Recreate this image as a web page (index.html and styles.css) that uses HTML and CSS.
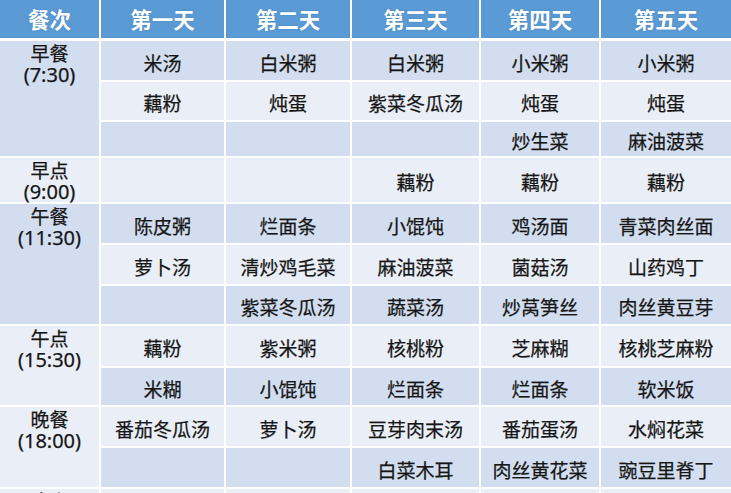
FILE: index.html
```html
<!DOCTYPE html>
<html lang="zh-CN">
<head>
<meta charset="utf-8">
<title>菜单</title>
<link rel="stylesheet" href="styles.css">
</head>
<body>
<table class="menu">
  <colgroup>
    <col class="c0"><col class="c1"><col class="c2"><col class="c3"><col class="c4"><col class="c5">
  </colgroup>
  <thead>
    <tr class="head">
      <th>餐次</th><th>第一天</th><th>第二天</th><th>第三天</th><th>第四天</th><th>第五天</th>
    </tr>
  </thead>
  <tbody>
    <tr class="dark h41">
      <td class="meal" rowspan="3"><span class="name">早餐</span><span class="time">(7:30)</span></td>
      <td>米汤</td><td>白米粥</td><td>白米粥</td><td>小米粥</td><td>小米粥</td>
    </tr>
    <tr class="light h40">
      <td>藕粉</td><td>炖蛋</td><td>紫菜冬瓜汤</td><td>炖蛋</td><td>炖蛋</td>
    </tr>
    <tr class="dark h36">
      <td></td><td></td><td></td><td>炒生菜</td><td>麻油菠菜</td>
    </tr>
    <tr class="light h46">
      <td class="meal"><span class="name">早点</span><span class="time">(9:00)</span></td>
      <td></td><td></td><td>藕粉</td><td>藕粉</td><td>藕粉</td>
    </tr>
    <tr class="dark h41">
      <td class="meal" rowspan="3"><span class="name">午餐</span><span class="time">(11:30)</span></td>
      <td>陈皮粥</td><td>烂面条</td><td>小馄饨</td><td>鸡汤面</td><td>青菜肉丝面</td>
    </tr>
    <tr class="light h41">
      <td>萝卜汤</td><td>清炒鸡毛菜</td><td>麻油菠菜</td><td>菌菇汤</td><td>山药鸡丁</td>
    </tr>
    <tr class="dark h40">
      <td></td><td>紫菜冬瓜汤</td><td>蔬菜汤</td><td>炒莴笋丝</td><td>肉丝黄豆芽</td>
    </tr>
    <tr class="light h42">
      <td class="meal" rowspan="2"><span class="name">午点</span><span class="time">(15:30)</span></td>
      <td>藕粉</td><td>紫米粥</td><td>核桃粉</td><td>芝麻糊</td><td>核桃芝麻粉</td>
    </tr>
    <tr class="dark h39">
      <td>米糊</td><td>小馄饨</td><td>烂面条</td><td>烂面条</td><td>软米饭</td>
    </tr>
    <tr class="light h41">
      <td class="meal" rowspan="2"><span class="name">晚餐</span><span class="time">(18:00)</span></td>
      <td>番茄冬瓜汤</td><td>萝卜汤</td><td>豆芽肉末汤</td><td>番茄蛋汤</td><td>水焖花菜</td>
    </tr>
    <tr class="dark h41">
      <td></td><td></td><td>白菜木耳</td><td>肉丝黄花菜</td><td>豌豆里脊丁</td>
    </tr>
    <tr class="light h41">
      <td class="meal"><span class="name">晚点</span><span class="time">(20:00)</span></td>
      <td></td><td></td><td></td><td></td><td></td>
    </tr>
  </tbody>
</table>
</body>
</html>
```
FILE: styles.css
```css
html, body {
  margin: 0;
  padding: 0;
  overflow: hidden;
  background: #ffffff;
}

.menu {
  width: 733px;
  table-layout: fixed;
  border-collapse: separate;
  border-spacing: 0;
  font-family: "Noto Sans", "Noto Sans CJK SC", sans-serif;
  color: #161616;
}

.c0 { width: 101px; }
.c1 { width: 125px; }
.c2 { width: 126px; }
.c3 { width: 129px; }
.c4 { width: 120px; }
.c5 { width: 132px; }

.menu th,
.menu td {
  padding: 0;
  border-right: 2px solid #ffffff;
  border-bottom: 2px solid #ffffff;
  text-align: center;
  white-space: nowrap;
}

.head th {
  height: 41px;
  box-sizing: border-box;
  border-bottom-width: 3px;
  background: #5b9bd5;
  color: #ffffff;
  font-family: "Noto Sans CJK SC", sans-serif;
  font-weight: 700;
  font-size: 21.5px;
  line-height: 24px;
  text-shadow: 0 0 2px rgba(40, 80, 130, 0.35);
  vertical-align: middle;
}

.menu td {
  font-family: "Noto Sans CJK SC", sans-serif;
  font-size: 19px;
  line-height: 22px;
  vertical-align: middle;
  padding-top: 4px;
  box-sizing: border-box;
  -webkit-text-stroke: 0.25px #161616;
}

.dark td { background: #d2deef; }
.light td { background: #eaeff7; }

.menu td.meal {
  vertical-align: top;
  padding-top: 1px;
}

.name,
.time {
  display: block;
  height: 21.5px;
  line-height: 21.5px;
}

.name {
  font-family: "Noto Sans CJK SC", sans-serif;
  font-size: 19px;
}

.time {
  font-family: "Noto Sans", "Noto Sans CJK SC", sans-serif;
  font-size: 20px;
}

.h36 { height: 36px; }
.h39 { height: 39px; }
.h40 { height: 40px; }
.h41 { height: 41px; }
.h42 { height: 42px; }
.h46 { height: 46px; }
```
